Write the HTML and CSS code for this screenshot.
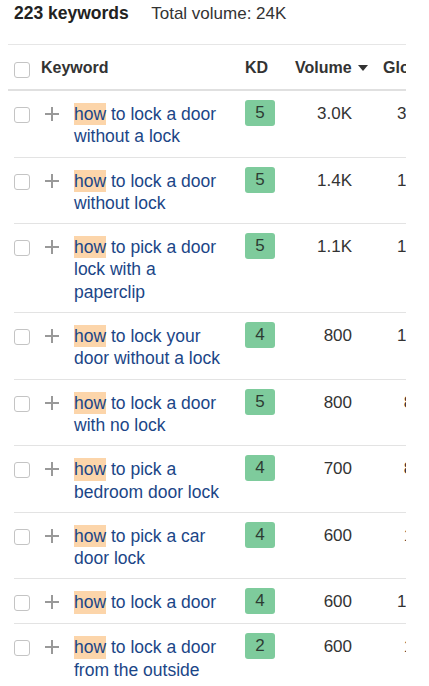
FILE: index.html
```html
<!DOCTYPE html>
<html lang="en">
<head>
    <meta charset="UTF-8">
    <meta name="viewport" content="width=device-width, initial-scale=1.0">
    <title>Keywords</title>
    <link rel="stylesheet" href="styles.css">
</head>
<body>
    <div class="summary">
        <span class="count">223 keywords</span>
        <span class="total">Total volume: 24K</span>
    </div>

    <div class="table">
        <div class="thead">
            <span class="checkbox"></span>
            <span class="th">Keyword</span>
            <span class="th">KD</span>
            <span class="th th-vol">Volume
                <svg class="sort" width="10" height="6" viewBox="0 0 10 6"><path d="M0 0h10L5 6z" fill="#333"/></svg>
            </span>
            <span class="th th-glo">Global volume</span>
        </div>

        <div class="tr">
            <span class="checkbox"></span>
            <span class="plus"></span>
            <a class="kw" href="#"><mark>how</mark> to lock a door without a lock</a>
            <span class="kd">5</span>
            <span class="vol">3.0K</span>
            <span class="glo">3.1K</span>
        </div>
        <div class="tr">
            <span class="checkbox"></span>
            <span class="plus"></span>
            <a class="kw" href="#"><mark>how</mark> to lock a door without lock</a>
            <span class="kd">5</span>
            <span class="vol">1.4K</span>
            <span class="glo">1.3K</span>
        </div>
        <div class="tr">
            <span class="checkbox"></span>
            <span class="plus"></span>
            <a class="kw" href="#"><mark>how</mark> to pick a door lock with a paperclip</a>
            <span class="kd">5</span>
            <span class="vol">1.1K</span>
            <span class="glo">1.1K</span>
        </div>
        <div class="tr">
            <span class="checkbox"></span>
            <span class="plus"></span>
            <a class="kw" href="#"><mark>how</mark> to lock your door without a lock</a>
            <span class="kd">4</span>
            <span class="vol">800</span>
            <span class="glo">1.5K</span>
        </div>
        <div class="tr">
            <span class="checkbox"></span>
            <span class="plus"></span>
            <a class="kw" href="#"><mark>how</mark> to lock a door with no lock</a>
            <span class="kd">5</span>
            <span class="vol">800</span>
            <span class="glo">850</span>
        </div>
        <div class="tr">
            <span class="checkbox"></span>
            <span class="plus"></span>
            <a class="kw" href="#"><mark>how</mark> to pick a bedroom door lock</a>
            <span class="kd">4</span>
            <span class="vol">700</span>
            <span class="glo">850</span>
        </div>
        <div class="tr">
            <span class="checkbox"></span>
            <span class="plus"></span>
            <a class="kw" href="#"><mark>how</mark> to pick a car door lock</a>
            <span class="kd">4</span>
            <span class="vol">600</span>
            <span class="glo">150</span>
        </div>
        <div class="tr">
            <span class="checkbox"></span>
            <span class="plus"></span>
            <a class="kw" href="#"><mark>how</mark> to lock a door</a>
            <span class="kd">4</span>
            <span class="vol">600</span>
            <span class="glo">1.2K</span>
        </div>
        <div class="tr">
            <span class="checkbox"></span>
            <span class="plus"></span>
            <a class="kw" href="#"><mark>how</mark> to lock a door from the outside</a>
            <span class="kd">2</span>
            <span class="vol">600</span>
            <span class="glo">150</span>
        </div>
    </div>
</body>
</html>
```

FILE: styles.css
```css
body {
    margin: 0;
    padding: 0 8px;
    background-color: #fff;
    color: #333;
    font-family: "Liberation Sans", Arial, sans-serif;
    font-size: 17px;
}

.summary {
    padding: 2px 0 20px 6px;
    line-height: 22px;
    height: 22px;
}

.count {
    font-weight: bold;
    font-size: 17.5px;
    color: #222;
    margin-right: 18px;
}

.total {
    color: #333;
}

.table {
    width: 398px;
    overflow: hidden;
    border-top: 1px solid #e6e6e6;
}

.thead {
    display: grid;
    grid-template-columns: 27px 204px 30px 93px 80px;
    padding: 12px 0 10px 6px;
    border-bottom: 2px solid #e0e0e0;
    line-height: 22px;
    font-size: 16px;
    font-weight: bold;
    white-space: nowrap;
}

.thead .checkbox {
    margin-top: 5px;
}

.th-vol {
    text-align: right;
}

.sort {
    margin-left: 2px;
    vertical-align: 2px;
}

.th-glo {
    padding-left: 15px;
}

.tr {
    display: grid;
    grid-template-columns: 31px 29px 171px 30px 93px 80px;
    align-items: start;
    margin-left: 6px;
    padding: 12px 0 9px 0;
    border-bottom: 1px solid #e3e3e3;
    line-height: 22.3px;
}

.checkbox {
    display: block;
    width: 14px;
    height: 14px;
    border: 1px solid #c4c4c4;
    border-radius: 3px;
    margin-top: 4px;
}

.plus {
    position: relative;
    display: block;
    width: 14px;
    height: 14px;
    margin-top: 4px;
}

.plus::before,
.plus::after {
    content: "";
    position: absolute;
    background-color: #999;
}

.plus::before {
    left: 0;
    top: 6px;
    width: 14px;
    height: 2px;
}

.plus::after {
    left: 6px;
    top: 0;
    width: 2px;
    height: 14px;
}

.kw {
    color: #1b4687;
    font-size: 17.5px;
    text-decoration: none;
    padding-right: 21px;
}

mark {
    display: inline-block;
    vertical-align: top;
    background-color: #fcd5aa;
    color: inherit;
}

.kd {
    display: block;
    margin-top: -3px;
    height: 26px;
    line-height: 26px;
    border-radius: 3px;
    background-color: #7ecb9c;
    color: #2d3b33;
    text-align: center;
}

.vol {
    text-align: right;
    padding-right: 16px;
}

.glo {
    text-align: right;
    padding-right: 16px;
    white-space: nowrap;
}
```
